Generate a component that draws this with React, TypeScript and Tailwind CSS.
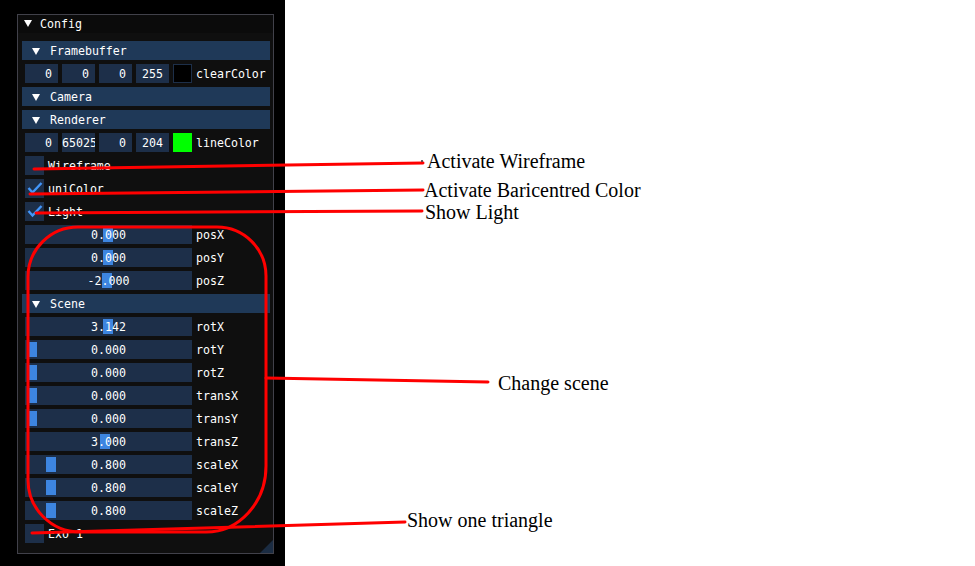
import React from "react";

const Arrow = ({ className = "" }: { className?: string }) => (
  <svg className={className} width="8" height="7" viewBox="0 0 8 7">
    <polygon points="0,0 8,0 4,7" fill="#ffffff" />
  </svg>
);

const Header = ({ label }: { label: string }) => (
  <div className="flex h-[19px] w-[248px] ml-[-3px] bg-[#1f3958]">
    <Arrow className="ml-[10px] mt-[7px]" />
    <span className="ml-[10px] pt-[4px]">{label}</span>
  </div>
);

const Field = ({ v, left = false }: { v: string; left?: boolean }) => (
  <div
    className={
      "flex h-[19px] w-[33px] overflow-hidden whitespace-pre bg-[#1d2f49] pt-[4px] " +
      (left ? "justify-start" : "justify-center")
    }
  >
    {v}
  </div>
);

const ColorRow = ({
  vals,
  color,
  label,
}: {
  vals: { v: string; left?: boolean }[];
  color: string;
  label: string;
}) => (
  <div className="flex h-[19px] gap-[4px]">
    {vals.map((f, i) => (
      <Field key={i} v={f.v} left={f.left} />
    ))}
    <div
      className={
        "h-[19px] w-[19px] " +
        (color === "black" ? "bg-black border border-[#1d2f49]" : "bg-[#00ff00]")
      }
    />
    <span className="pt-[4px]">{label}</span>
  </div>
);

const Check = ({ label, checked }: { label: string; checked: boolean }) => (
  <div className="flex h-[19px]">
    <div className="h-[19px] w-[19px] bg-[#1d2f49]">
      {checked && (
        <svg width="19" height="19" viewBox="0 0 19 19">
          <polyline
            points="3.5,9 7.5,13.5 16.5,4"
            fill="none"
            stroke="#4296fa"
            strokeWidth="2.4"
          />
        </svg>
      )}
    </div>
    <span className="ml-[4px] pt-[4px]">{label}</span>
  </div>
);

const Slider = ({ v, label, grab }: { v: string; label: string; grab: number }) => (
  <div className="flex h-[19px]">
    <div className="relative flex h-[19px] w-[167px] justify-center bg-[#1d2f49] pt-[4px]">
      <div className="absolute top-[2px] h-[15px] w-[10px] bg-[#3d85e0]" style={{ left: grab }} />
      <span className="relative whitespace-pre">{v}</span>
    </div>
    <span className="ml-[4px] pt-[4px]">{label}</span>
  </div>
);

export default function App() {
  return (
    <div className="relative flex h-[566px] w-[975px] overflow-hidden bg-white">
      <div className="h-[566px] w-[285px] bg-black pl-[17px] pt-[14px]">
        <div className="flex h-[540px] w-[257px] flex-col border border-[#41414a] bg-[#0f0f0f] font-['DejaVu_Sans_Mono',monospace] text-[11.6px] leading-[13px] text-white">
          <div className="flex h-[18px] bg-[#0b0b0b]">
            <Arrow className="ml-[6px] mt-[5px]" />
            <span className="ml-[8px] pt-[3px]">Config</span>
          </div>
          <div className="relative flex flex-1 flex-col gap-[4px] pl-[7px] pt-[8px]">
            <Header label="Framebuffer" />
            <ColorRow
              vals={[{ v: "  0" }, { v: "  0" }, { v: "  0" }, { v: "255" }]}
              color="black"
              label="clearColor"
            />
            <Header label="Camera" />
            <Header label="Renderer" />
            <ColorRow
              vals={[{ v: "  0" }, { v: "65025", left: true }, { v: "  0" }, { v: "204" }]}
              color="green"
              label="lineColor"
            />
            <Check label="Wireframe" checked={false} />
            <Check label="uniColor" checked={true} />
            <Check label="Light" checked={true} />
            <Slider v="0.000" label="posX" grab={78} />
            <Slider v="0.000" label="posY" grab={78} />
            <Slider v="-2.000" label="posZ" grab={77} />
            <Header label="Scene" />
            <Slider v="3.142" label="rotX" grab={78} />
            <Slider v="0.000" label="rotY" grab={2} />
            <Slider v="0.000" label="rotZ" grab={2} />
            <Slider v="0.000" label="transX" grab={2} />
            <Slider v="0.000" label="transY" grab={2} />
            <Slider v="3.000" label="transZ" grab={75} />
            <Slider v="0.800" label="scaleX" grab={21} />
            <Slider v="0.800" label="scaleY" grab={21} />
            <Slider v="0.800" label="scaleZ" grab={21} />
            <Check label="Exo 1" checked={false} />
            <svg className="absolute bottom-0 right-0" width="13" height="13" viewBox="0 0 13 13">
              <polygon points="13,0 13,13 0,13" fill="#1b2c42" />
            </svg>
          </div>
        </div>
      </div>
      <div className="flex-1 bg-white" />

      <div className="pointer-events-none absolute inset-0 font-['Liberation_Serif',serif] text-[20px] leading-[20px] text-black">
        <svg className="absolute inset-0" width="975" height="566" viewBox="0 0 975 566">
          <g stroke="#ff0000" strokeWidth="3" strokeLinecap="round" fill="none">
            <line x1="34" y1="169" x2="423" y2="163" />
            <line x1="30" y1="194" x2="423" y2="190" />
            <line x1="36" y1="213" x2="422" y2="211" />
            <path d="M 78 227 H 217 A 49 49 0 0 1 266 276 V 466 A 60 66 0 0 1 206 532 H 80 A 52 52 0 0 1 28 480 V 277 A 50 50 0 0 1 78 227 Z" />
            <line x1="266" y1="378" x2="488" y2="382" />
            <line x1="32" y1="533" x2="405" y2="522" />
          </g>
          <circle cx="422" cy="161" r="1" fill="#333333" />
        </svg>
        <span className="absolute left-[427px] top-[151px] whitespace-nowrap">Activate Wireframe</span>
        <span className="absolute left-[424px] top-[180px] whitespace-nowrap">Activate Baricentred Color</span>
        <span className="absolute left-[425px] top-[202px] whitespace-nowrap">Show Light</span>
        <span className="absolute left-[498px] top-[373px] whitespace-nowrap">Change scene</span>
        <span className="absolute left-[407px] top-[510px] whitespace-nowrap">Show one triangle</span>
      </div>
    </div>
  );
}
